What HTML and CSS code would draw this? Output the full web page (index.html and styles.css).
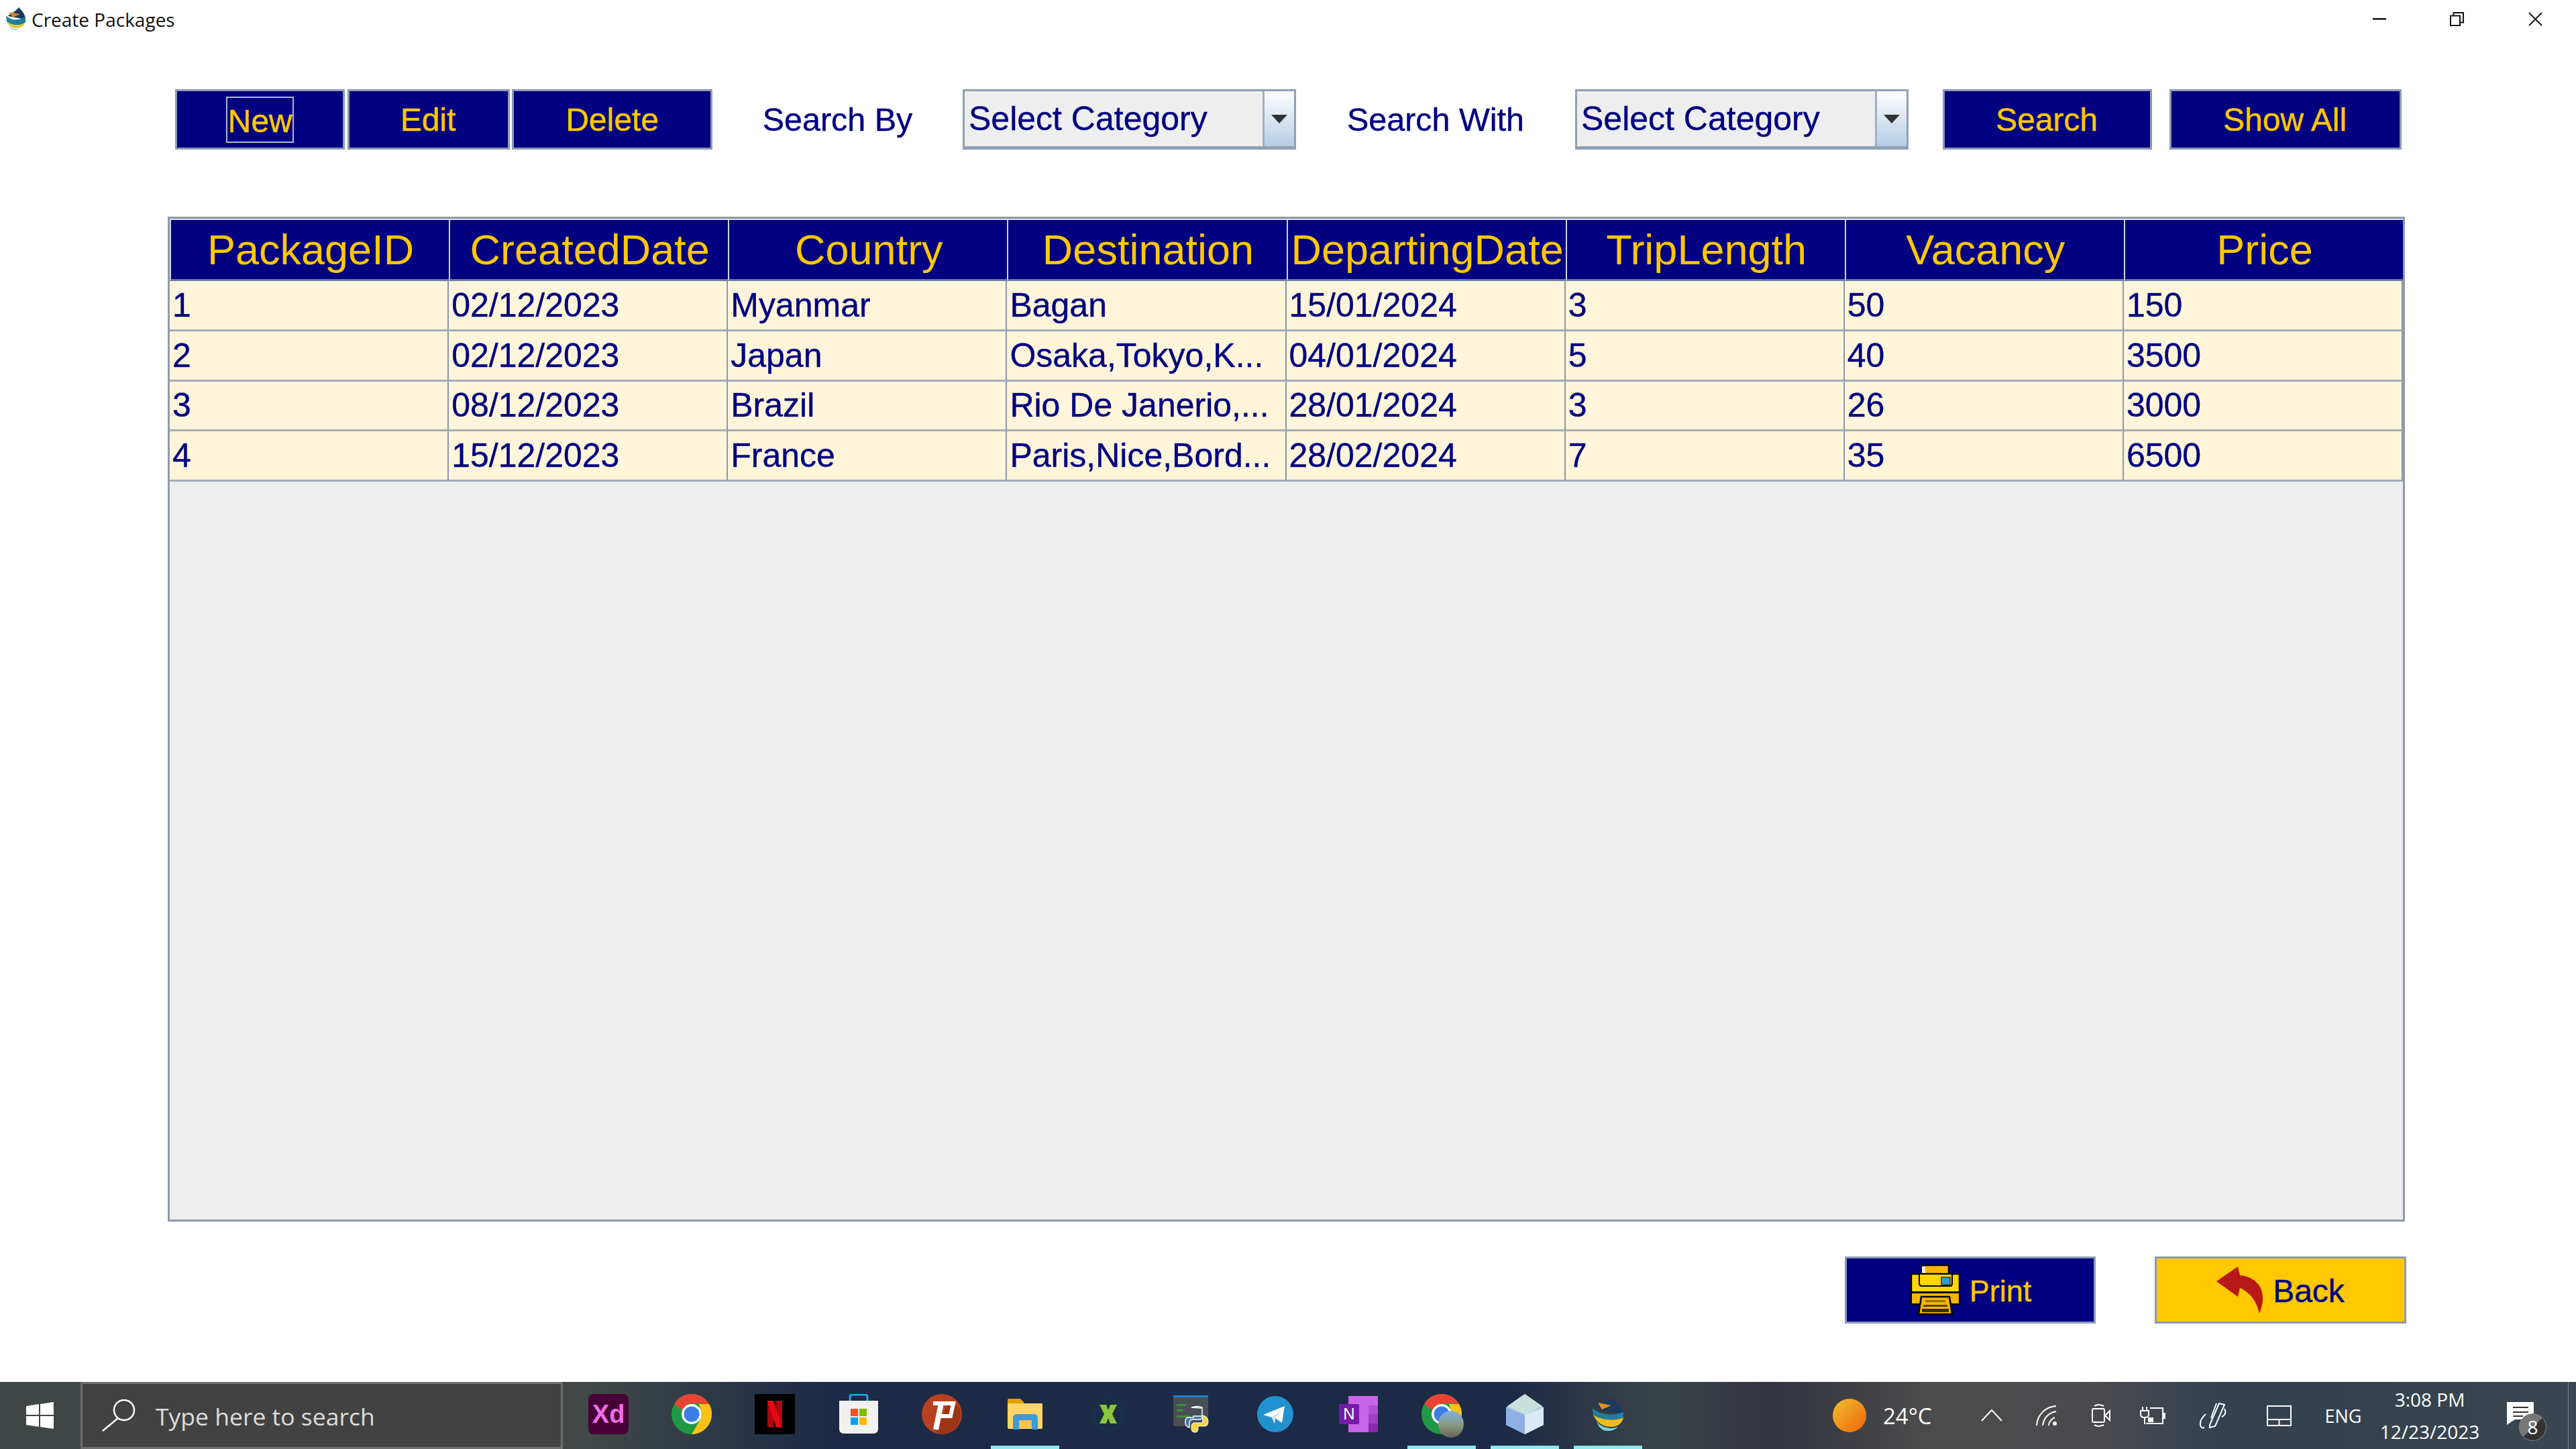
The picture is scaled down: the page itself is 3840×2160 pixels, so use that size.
FILE: index.html
```html
<!DOCTYPE html>
<html lang="en">

<head>
    <meta charset="UTF-8">
    <title>Create Packages</title>
    <link rel="stylesheet" href="styles.css">
</head>

<body>

    <!-- Title Bar -->
    <div class="titlebar">
        <svg class="app-icon" viewBox="0 0 34 34">
            <path d="M22 0C27 5 32 11 32 18L6 13C10 8 16 8 22 0Z" fill="#1b3a5e"/>
            <path d="M7 7L24 10L13 15Z" fill="#d9822b"/>
            <path d="M3 12C10 20 22 20 32 14L32 22C26 28 12 28 4 21Z" fill="#1f7fa0"/>
            <path d="M4 21C12 28 24 28 32 22C30 28 24 31 18 31C11 31 7 27 4 21Z" fill="#f2c230"/>
            <path d="M7 27C12 32 18 33 24 31L18 34C14 34 10 32 7 27Z" fill="#8fd8d8"/>
        </svg>
        <span class="title-text">Create Packages</span>
        <div class="win-controls">
            <svg class="win-min" viewBox="0 0 20 3"><rect width="20" height="2.5" fill="#111"/></svg>
            <svg class="win-restore" viewBox="0 0 21 21"><path d="M1 5.5H15V20H1ZM5.5 5V1H20V15.5H15.5" fill="none" stroke="#111" stroke-width="2"/></svg>
            <svg class="win-close" viewBox="0 0 21 21"><path d="M1 1L20 20M20 1L1 20" fill="none" stroke="#111" stroke-width="1.8"/></svg>
        </div>
    </div>

    <!-- Main Content -->
    <div class="main">
        <div class="toolbar">
            <button class="btn btn-new"><span class="focus-box">New</span></button>
            <button class="btn btn-edit">Edit</button>
            <button class="btn btn-delete">Delete</button>
            <span class="label label-by">Search By</span>
            <div class="combo">
                <span class="combo-text">Select Category</span>
                <span class="combo-arrow"><i class="triangle"></i></span>
            </div>
            <span class="label label-with">Search With</span>
            <div class="combo">
                <span class="combo-text">Select Category</span>
                <span class="combo-arrow"><i class="triangle"></i></span>
            </div>
            <button class="btn btn-search">Search</button>
            <button class="btn btn-showall">Show All</button>
        </div>

        <div class="table-panel">
            <table class="packages">
                <thead>
                    <tr>
                        <th>PackageID</th>
                        <th>CreatedDate</th>
                        <th>Country</th>
                        <th>Destination</th>
                        <th>DepartingDate</th>
                        <th>TripLength</th>
                        <th>Vacancy</th>
                        <th>Price</th>
                    </tr>
                </thead>
                <tbody>
                    <tr>
                        <td>1</td>
                        <td>02/12/2023</td>
                        <td>Myanmar</td>
                        <td>Bagan</td>
                        <td>15/01/2024</td>
                        <td>3</td>
                        <td>50</td>
                        <td>150</td>
                    </tr>
                    <tr>
                        <td>2</td>
                        <td>02/12/2023</td>
                        <td>Japan</td>
                        <td>Osaka,Tokyo,K...</td>
                        <td>04/01/2024</td>
                        <td>5</td>
                        <td>40</td>
                        <td>3500</td>
                    </tr>
                    <tr>
                        <td>3</td>
                        <td>08/12/2023</td>
                        <td>Brazil</td>
                        <td>Rio De Janerio,...</td>
                        <td>28/01/2024</td>
                        <td>3</td>
                        <td>26</td>
                        <td>3000</td>
                    </tr>
                    <tr>
                        <td>4</td>
                        <td>15/12/2023</td>
                        <td>France</td>
                        <td>Paris,Nice,Bord...</td>
                        <td>28/02/2024</td>
                        <td>7</td>
                        <td>35</td>
                        <td>6500</td>
                    </tr>
                </tbody>
            </table>
        </div>

        <div class="bottom-actions">
            <button class="btn btn-print">
                <svg class="print-icon" viewBox="0 0 74 76">
                    <rect x="17" y="1" width="40" height="26" fill="#f7b500" stroke="#000" stroke-width="2.5"/>
                    <rect x="17" y="3" width="5" height="22" fill="#eee"/>
                    <rect x="1" y="14" width="72" height="45" fill="#ffd800" stroke="#000" stroke-width="2.5"/>
                    <rect x="2" y="43" width="70" height="15" fill="#f7b500"/>
                    <rect x="2" y="40" width="70" height="3" fill="#000"/>
                    <path d="M13 15V28Q13 32 17 32H59Q62 32 62 28V15" fill="#ffd800" stroke="#000" stroke-width="2"/>
                    <rect x="46" y="19" width="13" height="11" fill="#2f9fd0" stroke="#333" stroke-width="1.5"/>
                    <path d="M16 48H58L62 74H12Z" fill="#f7b500" stroke="#000" stroke-width="2.5"/>
                    <rect x="22" y="53" width="30" height="3" fill="#9a7000"/>
                    <rect x="19" y="60" width="36" height="3" fill="#5b4200"/>
                    <rect x="17" y="66" width="40" height="5" fill="#3b2c00"/>
                </svg>
                <span class="print-text">Print</span>
            </button>
            <button class="btn btn-back">
                <svg class="back-icon" viewBox="0 0 70 70">
                    <path d="M32 0L0 22L32 45L35 32C50 38 60 52 64 70C70 56 72 38 62 26C54 17 45 14 35 13Z" fill="#b81818"/>
                </svg>
                <span>Back</span>
            </button>
        </div>
    </div>

    <!-- Windows Taskbar -->
    <div class="taskbar">
        <div class="start">
            <svg class="win-logo" viewBox="0 0 41 40">
                <path d="M0 6L19 3V19H0ZM21 3L41 0V19H21ZM0 21H19V37L0 34ZM21 21H41V40L21 37Z" fill="#fff"/>
            </svg>
        </div>
        <div class="search-box">
            <svg class="search-icon" viewBox="0 0 50 48">
                <circle cx="33" cy="16" r="15" fill="none" stroke="#fff" stroke-width="2.5"/>
                <path d="M24 28L1 47" stroke="#fff" stroke-width="2.5" fill="none"/>
            </svg>
            <span class="search-text">Type here to search</span>
        </div>
        <div class="task-icons">
            <div class="task-slot">
                <div class="xd-icon">Xd</div>
            </div>
            <div class="task-slot">
                <svg class="ic60" viewBox="0 0 60 60">
                    <circle cx="30" cy="30" r="30" fill="#1e9a46"/>
                    <path d="M30 0A30 30 0 0 1 56 15H30A15 15 0 0 0 16 24L4 15A30 30 0 0 1 30 0Z" fill="#ea4335"/>
                    <path d="M56 15A30 30 0 0 1 30 60L43 38A15 15 0 0 0 43 22L41 15Z" fill="#fbc116"/>
                    <circle cx="30" cy="30" r="15" fill="#fff"/>
                    <circle cx="30" cy="30" r="11.5" fill="#3b7ee8"/>
                </svg>
            </div>
            <div class="task-slot">
                <svg class="ic60" viewBox="0 0 60 60">
                    <rect width="60" height="60" fill="#000"/>
                    <path d="M19 10H28V50L19 49ZM32 10H41V50L32 49Z" fill="#b00610"/>
                    <path d="M19 10H28L41 50H32Z" fill="#e50914"/>
                </svg>
            </div>
            <div class="task-slot">
                <svg class="ic60" viewBox="0 0 60 60">
                    <path d="M17 10V4Q17 1 20 1H40Q43 1 43 4V10" fill="none" stroke="#1aa9e8" stroke-width="3"/>
                    <path d="M1 10H59V52Q59 59 52 59H8Q1 59 1 52Z" fill="#f1f1f1"/>
                    <rect x="18" y="22" width="11" height="11" fill="#f25022"/>
                    <rect x="31" y="22" width="11" height="11" fill="#7fba00"/>
                    <rect x="18" y="35" width="11" height="11" fill="#00a4ef"/>
                    <rect x="31" y="35" width="11" height="11" fill="#ffb900"/>
                </svg>
            </div>
            <div class="task-slot">
                <svg class="ic60" viewBox="0 0 60 60">
                    <circle cx="30" cy="30" r="30" fill="#b8401f"/>
                    <path d="M22 56L40 12L56 20A30 30 0 0 1 30 60Z" fill="#9c3418"/>
                    <path d="M17 14H47L43 33H27" fill="none" stroke="#fff" stroke-width="6"/>
                    <path d="M29 14L21 53" fill="none" stroke="#fff" stroke-width="8"/>
                </svg>
            </div>
            <div class="task-slot active">
                <svg class="ic-folder" viewBox="0 0 54 48">
                    <path d="M1 3Q1 1 3 1H20L25 6V14H1Z" fill="#e0a000"/>
                    <path d="M1 8H52Q53 8 53 9V44Q53 46 51 46H3Q1 46 1 44Z" fill="#ffd668"/>
                    <path d="M9 47V30Q9 24 15 24H40Q46 24 46 30V47H37V33H18V47Z" fill="#3f9ad8"/>
                    <rect x="18" y="33" width="19" height="12" fill="#f6c44e"/>
                </svg>
            </div>
            <div class="task-slot">
                <svg class="ic-xicon" viewBox="0 0 52 52">
                    <ellipse cx="26" cy="26" rx="26" ry="26" fill="#12364a" opacity="0.6"/>
                    <ellipse cx="26" cy="26" rx="18" ry="22" fill="#1c2b44"/>
                    <path d="M13 12H23L26 20L29 12H39L32 26L39 40H29L26 32L23 40H13L20 26Z" fill="#8bc53f"/>
                </svg>
            </div>
            <div class="task-slot">
                <svg class="ic-python" viewBox="0 0 56 56">
                    <rect x="1" y="0" width="52" height="46" fill="#474f55"/>
                    <rect x="1" y="0" width="52" height="3" fill="#1b7fd0"/>
                    <rect x="6" y="13" width="14" height="3" fill="#3d8f3d"/>
                    <rect x="6" y="21" width="10" height="3" fill="#3d8f3d"/>
                    <rect x="6" y="30" width="20" height="3" fill="#3d8f3d"/>
                    <path d="M28 18Q38 15 44 18V31H31V33H24Q19 33 19 39Q19 47 25 48V41Q25 36 31 36H40Q44 36 44 32V19Z" fill="#3a75a8" stroke="#fff" stroke-width="1.5"/>
                    <path d="M44 30Q53 31 53 39Q53 46 47 46H38V49Q38 56 33 55Q28 55 28 50V47Q28 41 33 41H45Z" fill="#f6d44a" stroke="#fff" stroke-width="1"/>
                </svg>
            </div>
            <div class="task-slot">
                <svg class="ic-tele" viewBox="0 0 54 54">
                    <circle cx="27" cy="27" r="27" fill="#2291cf"/>
                    <path d="M9 28L41 15L37 40L27 33L26 41L22 32L9 28Z" fill="#fff"/>
                    <path d="M22 32L37 20L27 33L26 41Z" fill="#cfe3f0"/>
                </svg>
            </div>
            <div class="task-slot">
                <svg class="ic-note" viewBox="0 0 58 54">
                    <rect x="14" y="0" width="44" height="54" rx="1" fill="#c965e8"/>
                    <rect x="44" y="14" width="14" height="14" fill="#b24fd0"/>
                    <rect x="44" y="27" width="14" height="14" fill="#a23fc0"/>
                    <rect x="44" y="41" width="14" height="13" fill="#8a28a8"/>
                    <rect x="0" y="12" width="30" height="30" rx="2" fill="#7719aa"/>
                    <text class="note-letter" x="15" y="35" text-anchor="middle">N</text>
                </svg>
            </div>
            <div class="task-slot active">
                <div class="chrome-wrap">
                    <svg class="ic60" viewBox="0 0 60 60">
                        <circle cx="30" cy="30" r="30" fill="#1e9a46"/>
                        <path d="M30 0A30 30 0 0 1 56 15H30A15 15 0 0 0 16 24L4 15A30 30 0 0 1 30 0Z" fill="#ea4335"/>
                        <path d="M56 15A30 30 0 0 1 30 60L43 38A15 15 0 0 0 43 22L41 15Z" fill="#fbc116"/>
                        <circle cx="30" cy="30" r="15" fill="#fff"/>
                        <circle cx="30" cy="30" r="11.5" fill="#3b7ee8"/>
                    </svg>
                    <span class="avatar"></span>
                </div>
            </div>
            <div class="task-slot active">
                <svg class="ic-cube" viewBox="0 0 56 60">
                    <path d="M28 0L56 20V46L28 60L0 46V20Z" fill="#a8c8ec"/>
                    <path d="M28 0L54 18L28 31L2 18Z" fill="#c8e0dc"/>
                    <path d="M28 31L56 20V46L28 60Z" fill="#d8eaf4"/>
                    <path d="M0 20L28 31V60L0 46Z" fill="#8fb0e4"/>
                </svg>
            </div>
            <div class="task-slot active">
                <svg class="ic-app" viewBox="0 0 46 50">
                    <path d="M28 0C34 6 44 14 46 26L4 14C12 8 20 10 28 0Z" fill="#1b3a5e"/>
                    <path d="M8 8L28 12L14 18Z" fill="#e09020"/>
                    <path d="M0 16C10 26 30 28 46 22V30C32 36 12 34 1 26Z" fill="#1f7fa0"/>
                    <path d="M1 26C12 34 34 36 46 30C44 40 36 44 28 44C16 44 6 38 1 26Z" fill="#f2bb20"/>
                    <path d="M6 36C14 46 28 48 38 44C32 50 26 50 22 50C14 50 9 44 6 36Z" fill="#7fd0d0"/>
                </svg>
            </div>
        </div>

        <div class="tray">
            <div class="weather">
                <span class="sun"></span>
                <span class="temp">24°C</span>
            </div>
            <div class="tray-slot slot-caret">
                <svg class="tray-ic caret" viewBox="0 0 32 18"><path d="M1 17L16 1L31 17" fill="none" stroke="#fff" stroke-width="2"/></svg>
            </div>
            <div class="tray-slot slot-wifi">
                <svg class="tray-ic wifi" viewBox="0 0 32 30">
                    <path d="M1 30C2 14 14 2 30 1M10 30C11 20 18 11 30 9M19 30C19 25 23 20 28 18" fill="none" stroke="#fff" stroke-width="2"/>
                    <circle cx="28" cy="27" r="3" fill="#fff"/>
                </svg>
            </div>
            <div class="tray-slot slot-cam">
                <svg class="tray-ic cam" viewBox="0 0 28 36">
                    <path d="M4 4Q10 0 18 4M4 32Q10 36 18 32" fill="none" stroke="#fff" stroke-width="2"/>
                    <rect x="1" y="8" width="18" height="20" rx="2" fill="none" stroke="#fff" stroke-width="2"/>
                    <path d="M20 18L27 11V25Z" fill="none" stroke="#fff" stroke-width="2"/>
                </svg>
            </div>
            <div class="tray-slot slot-battery">
                <svg class="tray-ic battery" viewBox="0 0 40 26">
                    <path d="M5 0V6M11 0V6M2 6H14V12Q14 16 8 16Q2 16 2 12ZM8 16V26" fill="none" stroke="#fff" stroke-width="2"/>
                    <path d="M16 2H35V25H10" fill="none" stroke="#fff" stroke-width="2"/>
                    <rect x="13" y="16" width="8" height="7" fill="#fff"/>
                    <rect x="36" y="9" width="3" height="9" fill="#fff"/>
                </svg>
            </div>
            <div class="tray-slot slot-pen">
                <svg class="tray-ic pen" viewBox="0 0 42 40">
                    <path d="M16 34L30 2L38 4L24 36L16 38ZM26 2L18 24" fill="none" stroke="#fff" stroke-width="2"/>
                    <path d="M10 18Q1 26 2 34Q3 40 8 38M38 10Q42 18 34 22" fill="none" stroke="#fff" stroke-width="2"/>
                </svg>
            </div>
            <div class="tray-slot slot-touch">
                <svg class="tray-ic touch" viewBox="0 0 37 31">
                    <path d="M1 1H36V30H1ZM1 21H36M18.5 21V30" fill="none" stroke="#fff" stroke-width="2"/>
                </svg>
            </div>
            <div class="tray-slot slot-eng">ENG</div>
            <div class="tray-slot slot-clock">
                <span>3:08 PM</span>
                <span>12/23/2023</span>
            </div>
            <div class="action-center">
                <div class="notif-wrap">
                    <svg class="notif" viewBox="0 0 40 34">
                        <path d="M0 0H40V26H12L0 34Z" fill="#fff"/>
                        <path d="M9 8H32M9 15H32M9 21H24" stroke="#333" stroke-width="2"/>
                    </svg>
                    <span class="notif-badge">8</span>
                </div>
            </div>
        </div>
    </div>

</body>

</html>
```
FILE: styles.css
```css
* {
    box-sizing: border-box;
}

html,
body {
    margin: 0;
    width: 3840px;
    height: 2160px;
    overflow: hidden;
}

body {
    display: flex;
    flex-direction: column;
    background-color: #fff;
    font-family: "Liberation Sans", Arial, sans-serif;
}

/* Title Bar */
.titlebar {
    height: 56px;
    display: flex;
    align-items: center;
    padding-left: 6px;
}

.app-icon {
    width: 34px;
    height: 34px;
}

.title-text {
    margin-left: 7px;
    padding-top: 2px;
    font-family: "Open Sans", sans-serif;
    font-size: 28px;
    color: #111;
}

.win-controls {
    margin-left: auto;
    display: flex;
    align-items: center;
    padding-right: 50px;
    height: 56px;
}

.win-min {
    width: 20px;
    height: 3px;
}

.win-restore {
    width: 21px;
    height: 21px;
    margin-left: 95px;
}

.win-close {
    width: 21px;
    height: 21px;
    margin-left: 96px;
}

/* Main Content */
.main {
    flex: 1;
}

.toolbar {
    display: flex;
    margin-top: 77px;
    margin-left: 261px;
    height: 90px;
}

.btn {
    height: 90px;
    border: 3px solid #8c9ab4;
    padding: 0;
    background-color: #000080;
    color: #ffc800;
    font-family: "Liberation Sans", Arial, sans-serif;
    font-size: 48px;
    -webkit-text-stroke: 0.4px #ffc800;
    cursor: pointer;
}

.btn-new {
    width: 253px;
    display: flex;
    align-items: center;
    justify-content: center;
}

.focus-box {
    display: block;
    width: 101px;
    height: 69px;
    line-height: 69px;
    border: 2px solid #a9b8d0;
}

.btn-edit {
    width: 242px;
    margin-left: 4px;
    padding-right: 2px;
}

.btn-delete {
    width: 299px;
    margin-left: 3px;
}

.btn-search {
    width: 312px;
    margin-left: 51px;
    padding-right: 2px;
}

.btn-showall {
    width: 346px;
    margin-left: 26px;
    padding-right: 2px;
}

.label {
    display: flex;
    align-items: center;
    justify-content: center;
    font-size: 48.5px;
    color: #000080;
    -webkit-text-stroke: 0.4px #000080;
}

.label-by {
    width: 373px;
}

.label-with {
    width: 416px;
}

.combo {
    width: 497px;
    display: flex;
    border: 3px solid #8fa0b6;
    border-bottom-width: 5px;
    background-color: #eeeeee;
}

.combo-text {
    flex: 1;
    padding-left: 6px;
    display: flex;
    align-items: center;
    font-size: 50px;
    color: #000080;
    -webkit-text-stroke: 0.4px #000080;
}

.combo-arrow {
    width: 47px;
    display: flex;
    align-items: center;
    justify-content: center;
    border-left: 3px solid #9fb0c4;
    background: linear-gradient(#ffffff, #b5cde4);
}

.triangle {
    width: 0;
    height: 0;
    border-left: 12px solid transparent;
    border-right: 12px solid transparent;
    border-top: 13px solid #333;
}

/* Table */
.table-panel {
    width: 3335px;
    height: 1498px;
    margin-top: 100px;
    margin-left: 250px;
    border: 3px solid #8f9bab;
    background-color: #eeeeee;
}

.packages {
    width: 100%;
    table-layout: fixed;
    border-collapse: separate;
    border-spacing: 0;
}

.packages th {
    height: 93px;
    padding: 0 0 0 2px;
    background-color: #000080;
    border-top: 2px solid #d4dbe6;
    border-left: 2px solid #cdd5e2;
    border-bottom: 3px solid #6c7ea4;
    color: #ffc800;
    font-size: 63px;
    font-weight: normal;
    white-space: nowrap;
}

.packages td {
    height: 74.8px;
    padding: 0 0 0 4px;
    background-color: #fff5da;
    border-right: 2px solid #8b98a8;
    border-bottom: 3px solid #a4adb8;
    color: #000080;
    font-size: 50px;
    -webkit-text-stroke: 0.4px #000080;
    white-space: nowrap;
    overflow: hidden;
}

/* Bottom Buttons */
.bottom-actions {
    display: flex;
    justify-content: flex-end;
    gap: 88px;
    margin-top: 52px;
    padding-right: 253px;
}

.btn-print,
.btn-back {
    width: 374px;
    height: 100px;
    display: flex;
    align-items: center;
    justify-content: center;
    padding-top: 3px;
}

.btn-print {
    padding-left: 2px;
}

.print-icon {
    width: 74px;
    height: 76px;
    margin-top: -3px;
}

.print-text {
    margin-left: 14px;
    font-size: 45px;
}

.btn-back {
    width: 375px;
    background-color: #ffc800;
    color: #000080;
    -webkit-text-stroke: 0.4px #000080;
}

.back-icon {
    width: 70px;
    height: 70px;
    margin-top: -3px;
    margin-right: 14px;
}

/* Windows Taskbar */
.taskbar {
    height: 100px;
    display: flex;
    color: #fff;
    font-family: "Open Sans", sans-serif;
    background: linear-gradient(90deg, #3f4645 0, #414847 880px, #1c2a45 1230px, #1c2a45 2250px, #3b4548 2480px, #32333f 2640px, #4c4c4c 2880px, #4a4a4e 3130px, #33414f 3330px, #3a4650 3840px);
}

.start {
    width: 120px;
    display: flex;
    align-items: center;
    padding-left: 39px;
}

.win-logo {
    width: 41px;
    height: 40px;
}

.search-box {
    width: 719px;
    display: flex;
    align-items: center;
    padding-left: 29px;
    background-color: #424242;
    border: 3px solid #6e6e6e;
}

.search-icon {
    width: 50px;
    height: 48px;
}

.search-text {
    margin-left: 30px;
    padding-top: 2px;
    font-size: 35.5px;
    color: #ddd;
}

.task-icons {
    display: grid;
    grid-template-columns: repeat(13, 124.2px);
    padding-left: 6px;
}

.task-slot {
    display: flex;
    align-items: center;
    justify-content: center;
    height: 100px;
    padding-top: 1px;
    border-bottom: 5px solid transparent;
}

.task-slot.active {
    border-bottom-color: #90e8ea;
    margin: 0 11px;
}

.ic60 {
    width: 60px;
    height: 60px;
    display: block;
}

.xd-icon {
    width: 60px;
    height: 60px;
    border-radius: 8px;
    background-color: #470137;
    color: #f06ce8;
    font-family: "Liberation Sans", Arial, sans-serif;
    font-size: 38px;
    font-weight: bold;
    line-height: 60px;
    text-align: center;
}

.ic-folder {
    width: 54px;
    height: 48px;
}

.ic-xicon {
    width: 52px;
    height: 52px;
}

.ic-python {
    width: 56px;
    height: 56px;
}

.ic-tele {
    width: 54px;
    height: 54px;
}

.ic-note {
    width: 58px;
    height: 54px;
}

.note-letter {
    font-family: "Liberation Sans", Arial, sans-serif;
    font-size: 24px;
    fill: #fff;
}

.chrome-wrap {
    position: relative;
    width: 60px;
    height: 60px;
}

.avatar {
    position: absolute;
    left: 25px;
    top: 25px;
    width: 38px;
    height: 40px;
    border-radius: 50%;
    background: linear-gradient(#7fb0e0, #8a9a80 55%, #66605a);
}

.ic-cube {
    width: 56px;
    height: 60px;
}

.ic-app {
    width: 46px;
    height: 50px;
}

/* Tray */
.tray {
    margin-left: auto;
    display: flex;
    height: 100px;
    padding-right: 12px;
    position: relative;
}

.tray::after {
    content: "";
    position: absolute;
    right: 11px;
    top: 0;
    bottom: 0;
    width: 1px;
    background-color: #77808a;
}

.weather {
    width: 196px;
    display: flex;
    align-items: center;
}

.sun {
    width: 50px;
    height: 50px;
    border-radius: 50%;
    background: linear-gradient(135deg, #f0c030, #f06508);
}

.temp {
    margin-left: 25px;
    font-size: 33px;
}

.tray-slot {
    display: flex;
    align-items: center;
    justify-content: center;
}

.slot-caret {
    width: 82px;
}

.slot-wifi {
    width: 82px;
}

.slot-cam {
    width: 80px;
}

.slot-battery {
    width: 74px;
}

.slot-pen {
    width: 106px;
}

.slot-touch {
    width: 90px;
}

.slot-eng {
    width: 102px;
    font-size: 27px;
}

.slot-clock {
    width: 156px;
    flex-direction: column;
    gap: 10px;
    font-size: 28px;
    line-height: 38px;
    white-space: nowrap;
}

.caret {
    width: 32px;
    height: 18px;
}

.wifi {
    width: 32px;
    height: 30px;
}

.cam {
    width: 28px;
    height: 36px;
}

.battery {
    width: 40px;
    height: 26px;
}

.pen {
    width: 42px;
    height: 40px;
}

.touch {
    width: 37px;
    height: 31px;
}

.action-center {
    width: 128px;
    padding: 30px 0 0 37px;
}

.notif-wrap {
    position: relative;
    width: 40px;
    height: 34px;
}

.notif {
    width: 40px;
    height: 34px;
    display: block;
}

.notif-badge {
    position: absolute;
    left: 18px;
    top: 17px;
    width: 41px;
    height: 41px;
    border-radius: 50%;
    border: 1px solid #888;
    background: linear-gradient(135deg, #777 50%, #333 50%);
    color: #fff;
    font-size: 28px;
    line-height: 38px;
    text-align: center;
}
```
